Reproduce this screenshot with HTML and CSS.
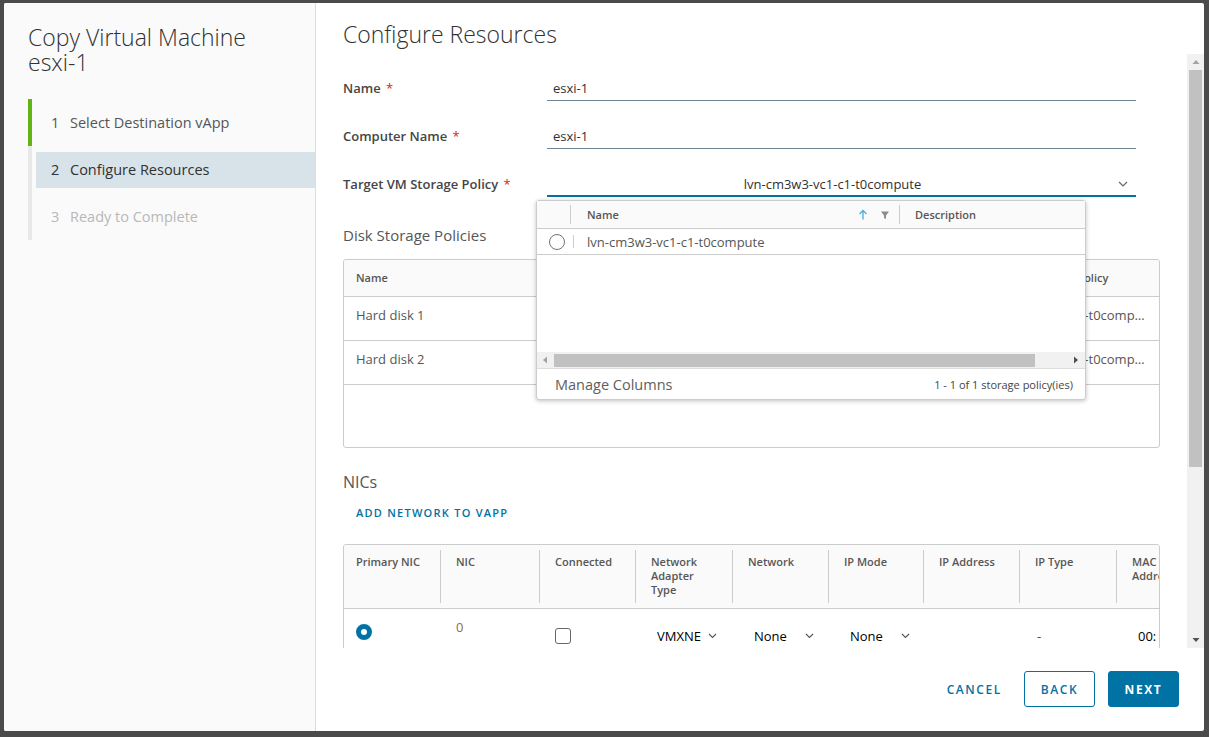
FILE: index.html
```html
<!DOCTYPE html>
<html>
<head>
<meta charset="utf-8">
<title>Copy Virtual Machine</title>
<link rel="stylesheet" href="styles.css">
</head>
<body>
<div class="overlay">
  <div class="modal">
    <aside class="sidebar">
      <h1 class="wiz-title">Copy Virtual Machine<br>esxi-1</h1>
      <ol class="steps">
        <li class="step done"><div class="step-label"><span class="num">1</span>Select Destination vApp</div></li>
        <li class="step current"><div class="step-label"><span class="num">2</span>Configure Resources</div></li>
        <li class="step todo"><div class="step-label"><span class="num">3</span>Ready to Complete</div></li>
      </ol>
    </aside>
    <section class="main">
      <h2 class="page-title">Configure Resources</h2>
      <div class="scroll-area">
        <div class="scroll-content">
          <div class="form">
            <div class="form-row">
              <label class="form-label">Name <span class="req">*</span></label>
              <div class="input">esxi-1</div>
            </div>
            <div class="form-row">
              <label class="form-label">Computer Name <span class="req">*</span></label>
              <div class="input">esxi-1</div>
            </div>
            <div class="form-row last">
              <label class="form-label">Target VM Storage Policy <span class="req">*</span></label>
              <div class="select-wrap">
                <div class="select">
                  <span class="select-text">lvn-cm3w3-vc1-c1-t0compute</span>
                  <svg class="select-caret" width="10" height="6" viewBox="0 0 10 6"><path d="M1 1 L5 5 L9 1" fill="none" stroke="#666" stroke-width="1.2"/></svg>
                </div>
                <div class="popup">
                  <div class="pop-head">
                    <div class="pop-th pop-sel"></div>
                    <div class="pop-th pop-name">
                      <span>Name</span>
                      <span class="pop-icons">
                        <svg width="10" height="11" viewBox="0 0 10 11"><path d="M5 10.5 V1.5 M1.5 5 L5 1.5 L8.5 5" fill="none" stroke="#49afd9" stroke-width="1.3"/></svg>
                        <svg width="10" height="10" viewBox="0 0 10 10"><path d="M1 1.5 H9 L6 5.5 V9 L4 8 V5.5 Z" fill="#8c8c8c"/></svg>
                      </span>
                    </div>
                    <div class="pop-th pop-desc">Description</div>
                  </div>
                  <div class="pop-row">
                    <div class="pop-td pop-sel"><span class="radio-empty"></span></div>
                    <div class="pop-td pop-val">lvn-cm3w3-vc1-c1-t0compute</div>
                  </div>
                  <div class="pop-body"></div>
                  <div class="hscroll">
                    <svg class="hs-arrow" width="6" height="8" viewBox="0 0 6 8"><path d="M5 0.5 V7.5 L1 4 Z" fill="#a3a3a3"/></svg>
                    <div class="hs-thumb"></div>
                    <svg class="hs-arrow right" width="6" height="8" viewBox="0 0 6 8"><path d="M1 0.5 V7.5 L5 4 Z" fill="#505050"/></svg>
                  </div>
                  <div class="pop-foot">
                    <span class="manage">Manage Columns</span>
                    <span class="count">1 - 1 of 1 storage policy(ies)</span>
                  </div>
                </div>
              </div>
            </div>
          </div>

          <h3 class="section-title">Disk Storage Policies</h3>
          <div class="disk-table">
            <div class="disk-row disk-head">
              <div class="th">Name</div>
              <div class="th">Size</div>
              <div class="th">Target VM Storage Policy</div>
            </div>
            <div class="disk-row">
              <div class="td">Hard disk 1</div>
              <div class="td">16 GB</div>
              <div class="td ell">lvn-cm3w3-vc1-c1-t0compute</div>
            </div>
            <div class="disk-row">
              <div class="td">Hard disk 2</div>
              <div class="td">16 GB</div>
              <div class="td ell">lvn-cm3w3-vc1-c1-t0compute</div>
            </div>
            <div class="disk-empty"></div>
          </div>

          <h3 class="section-title nics">NICs</h3>
          <button class="link-btn">ADD NETWORK TO VAPP</button>
          <div class="nic-table">
            <div class="nic-row nic-head">
              <div class="nth first">Primary NIC</div>
              <div class="nth">NIC</div>
              <div class="nth">Connected</div>
              <div class="nth">Network Adapter Type</div>
              <div class="nth">Network</div>
              <div class="nth">IP Mode</div>
              <div class="nth">IP Address</div>
              <div class="nth">IP Type</div>
              <div class="nth last">MAC Address</div>
            </div>
            <div class="nic-row">
              <div class="ntd first"><span class="radio-on"></span></div>
              <div class="ntd"><span class="nic-num">0</span></div>
              <div class="ntd"><span class="checkbox"></span></div>
              <div class="ntd"><span class="mini-select"><span class="ms-text">VMXNE</span><svg width="9" height="6" viewBox="0 0 9 6"><path d="M1 1 L4.5 4.5 L8 1" fill="none" stroke="#555" stroke-width="1.1"/></svg></span></div>
              <div class="ntd"><span class="mini-select"><span class="ms-text">None</span><svg width="9" height="6" viewBox="0 0 9 6"><path d="M1 1 L4.5 4.5 L8 1" fill="none" stroke="#555" stroke-width="1.1"/></svg></span></div>
              <div class="ntd"><span class="mini-select"><span class="ms-text">None</span><svg width="9" height="6" viewBox="0 0 9 6"><path d="M1 1 L4.5 4.5 L8 1" fill="none" stroke="#555" stroke-width="1.1"/></svg></span></div>
              <div class="ntd"></div>
              <div class="ntd"><span class="plain">-</span></div>
              <div class="ntd"><span class="plain mac">00:</span></div>
            </div>
          </div>
        </div>
        <div class="vscroll">
          <svg class="vs-arrow" width="8" height="6" viewBox="0 0 8 6"><path d="M0.5 5 H7.5 L4 1 Z" fill="#a3a3a3"/></svg>
          <div class="vs-thumb"></div>
          <div class="vs-space"></div>
          <svg class="vs-arrow" width="8" height="6" viewBox="0 0 8 6"><path d="M0.5 1 H7.5 L4 5 Z" fill="#505050"/></svg>
        </div>
      </div>
      <footer class="footer">
        <button class="btn btn-flat">CANCEL</button>
        <button class="btn btn-outline">BACK</button>
        <button class="btn btn-primary">NEXT</button>
      </footer>
    </section>
  </div>
</div>
</body>
</html>
```

FILE: styles.css
```css
* { box-sizing: border-box; }
html, body { margin: 0; padding: 0; }
body {
  background: #4b4b4b;
  font-family: "Open Sans", "Liberation Sans", sans-serif;
  color: #565656;
}
.overlay {
  width: 1209px;
  height: 737px;
  padding: 3px 0 0 4px;
}
.modal {
  width: 1200px;
  height: 728px;
  display: flex;
  background: #fff;
  border-radius: 2px;
  overflow: hidden;
}

/* Sidebar */
.sidebar {
  width: 312px;
  flex: none;
  background: #fafafa;
  border-right: 1px solid #dddddd;
  padding: 22px 0 0 24px;
}
.wiz-title {
  margin: 0;
  font-size: 23px;
  font-weight: 300;
  line-height: 25px;
  color: #313131;
}
.steps {
  list-style: none;
  margin: 24px 0 0 0;
  padding: 0;
}
.step {
  border-left: 4px solid #e8e8e8;
  padding: 6px 0 5px 4px;
}
.step.done { border-left-color: #60b515; }
.step-label {
  height: 36px;
  display: flex;
  align-items: center;
  padding-left: 15px;
  padding-bottom: 1px;
  font-size: 14.5px;
  color: #565656;
}
.num { width: 19px; }
.current .step-label { background: #d8e3e9; color: #313131; }
.todo .step-label { color: #b8b8b8; }

/* Main */
.main {
  flex: 1;
  display: flex;
  flex-direction: column;
  min-width: 0;
}
.page-title {
  margin: 0;
  height: 51px;
  padding: 17px 0 0 27px;
  font-size: 23px;
  line-height: 28px;
  font-weight: 300;
  color: #313131;
}
.scroll-area {
  height: 594px;
  display: flex;
}
.scroll-content {
  flex: 1;
  padding: 0 27px;
  overflow: hidden;
  min-width: 0;
}
.vscroll {
  width: 17px;
  flex: none;
  background: #f1f1f1;
  display: flex;
  flex-direction: column;
  align-items: center;
}
.vs-arrow { flex: none; margin: 5px 0; }
.vs-thumb {
  width: 13px;
  height: 397px;
  background: #c1c1c1;
}
.vs-space { flex: 1; }

/* Form */
.form { padding-top: 23px; }
.form-row {
  display: flex;
  height: 24px;
  margin-bottom: 24px;
}
.form-row.last { margin-bottom: 0; }
.form-label {
  width: 204px;
  flex: none;
  font-size: 13px;
  font-weight: 600;
  line-height: 22px;
  color: #454545;
}
.req { color: #e12200; font-weight: 400; margin-left: 2px; }
.input {
  width: 589px;
  height: 24px;
  border-bottom: 1px solid #6f8591;
  padding-left: 6px;
  font-size: 13px;
  line-height: 22px;
  color: #313131;
}
.select-wrap {
  width: 589px;
  position: relative;
}
.select {
  height: 24px;
  border-bottom: 2px solid #0072a3;
  display: flex;
  align-items: center;
  position: relative;
  font-size: 13px;
  color: #313131;
}
.select-text { flex: 1; text-align: center; line-height: 22px; }
.select-caret { margin-right: 8px; }

/* Dropdown popup */
.popup {
  position: absolute;
  left: -11px;
  top: 27px;
  width: 550px;
  height: 200px;
  background: #fff;
  border: 1px solid #cccccc;
  border-radius: 3px;
  box-shadow: 0 1px 4px rgba(0,0,0,0.25);
  display: flex;
  flex-direction: column;
  z-index: 5;
}
.pop-head {
  height: 28px;
  flex: none;
  display: flex;
  background: #fafafa;
  border-bottom: 1px solid #cccccc;
}
.pop-th {
  position: relative;
  display: flex;
  align-items: center;
  font-size: 11px;
  font-weight: 600;
  color: #565656;
}
.pop-sel { width: 34px; flex: none; }
.pop-th.pop-sel::after,
.pop-th.pop-name::after {
  content: "";
  position: absolute;
  right: 0;
  top: 4px;
  bottom: 4px;
  width: 1px;
  background: #cccccc;
}
.pop-name {
  width: 329px;
  flex: none;
  padding-left: 16px;
  justify-content: space-between;
  padding-right: 10px;
}
.pop-icons { display: flex; align-items: center; gap: 12px; }
.pop-desc { flex: 1; padding-left: 15px; }
.pop-row {
  height: 26px;
  flex: none;
  display: flex;
  border-bottom: 1px solid #cccccc;
}
.pop-td {
  display: flex;
  align-items: center;
  position: relative;
  font-size: 13px;
  color: #565656;
}
.pop-td.pop-sel { justify-content: flex-start; padding-left: 12px; }
.pop-td.pop-sel::after {
  content: "";
  position: absolute;
  right: -3px;
  top: 6px;
  bottom: 6px;
  width: 1px;
  background: #cccccc;
}
.pop-val { padding-left: 16px; }
.radio-empty {
  width: 16px;
  height: 16px;
  border: 1px solid #737373;
  border-radius: 50%;
  background: #fff;
}
.pop-body { flex: 1; }
.hscroll {
  height: 16px;
  flex: none;
  background: #f1f1f1;
  display: flex;
  align-items: center;
  padding: 0 6px 0 5px;
}
.hs-thumb {
  height: 13px;
  width: 481px;
  background: #c1c1c1;
  margin-left: 6px;
}
.hs-arrow.right { margin-left: auto; }
.pop-foot {
  height: 31px;
  flex: none;
  border-top: 1px solid #dddddd;
  display: flex;
  align-items: center;
  justify-content: space-between;
  padding: 0 12px 0 18px;
}
.manage { font-size: 14.5px; color: #5e5e5e; }
.count { font-size: 11px; color: #454545; }

/* Sections */
.section-title {
  margin: 28px 0 0 0;
  height: 20px;
  font-size: 15px;
  line-height: 20px;
  font-weight: 400;
  color: #565656;
}
.section-title.nics {
  margin-top: 24px;
  font-size: 16px;
}

/* Disk table */
.disk-table {
  margin-top: 14px;
  border: 1px solid #cccccc;
  border-radius: 3px;
  overflow: hidden;
}
.disk-row {
  display: grid;
  grid-template-columns: 300px 1fr 194px;
  height: 44px;
  border-bottom: 1px solid #cccccc;
}
.disk-head {
  height: 37px;
  background: #fafafa;
}
.th {
  padding: 11px 12px 0;
  font-size: 11px;
  font-weight: 600;
  line-height: 14px;
  color: #565656;
  white-space: nowrap;
  overflow: hidden;
}
.td {
  padding: 10px 12px 0;
  font-size: 13px;
  line-height: 16px;
  color: #565656;
  white-space: nowrap;
}
.td.ell { overflow: hidden; text-overflow: ellipsis; }
.disk-empty { height: 62px; }

/* Link button */
.link-btn {
  display: block;
  margin: 8px 0 0 0;
  height: 24px;
  padding: 0 13px;
  border: 0;
  background: none;
  font-family: inherit;
  font-size: 11px;
  font-weight: 600;
  letter-spacing: 1.25px;
  color: #0072a3;
}

/* NIC table */
.nic-table {
  margin-top: 20px;
  border: 1px solid #cccccc;
  border-radius: 3px 3px 0 0;
  overflow: hidden;
}
.nic-row {
  display: grid;
  grid-template-columns: 97px 99px 96px 97px 96px 95px 96px 97px 97px;
  height: 60px;
}
.nic-head {
  height: 64px;
  background: #fafafa;
  border-bottom: 1px solid #cccccc;
}
.nth {
  position: relative;
  padding: 10px 20px 0 15px;
  font-size: 11px;
  font-weight: 600;
  line-height: 14px;
  color: #565656;
}
.nth.first { padding-left: 12px; padding-right: 6px; }
.nth::after {
  content: "";
  position: absolute;
  right: 0;
  top: 5px;
  bottom: 5px;
  width: 1px;
  background: #cccccc;
}
.nth.last::after { display: none; }
.ntd {
  padding: 12px 0 0 15px;
  font-size: 13px;
  line-height: 16px;
  color: #313131;
  white-space: nowrap;
}
.ntd.first { padding-left: 12px; }
.radio-on {
  display: block;
  margin-top: 3px;
  width: 16px;
  height: 16px;
  border-radius: 50%;
  background: #fff;
  border: 5px solid #0072a3;
}
.nic-num { display: block; color: #9a6a45; margin-top: -2px; }
.checkbox {
  display: block;
  margin-top: 7px;
  width: 16px;
  height: 16px;
  border: 1px solid #666666;
  border-radius: 3px;
  background: #fff;
}
.mini-select {
  margin-top: 7px;
  display: flex;
  align-items: center;
  padding-left: 6px;
  gap: 5px;
  color: #000;
}
.ms-text { width: 46px; overflow: hidden; }
.plain { display: block; margin-top: 7px; padding-left: 2px; color: #454545; }
.plain.mac { padding-left: 6px; color: #000; }

/* Footer */
.footer {
  height: 83px;
  flex: none;
  display: flex;
  justify-content: flex-end;
  align-items: flex-start;
  padding: 23px 25px 0 0;
}
.btn {
  height: 36px;
  border-radius: 3px;
  font-family: inherit;
  font-size: 12px;
  font-weight: 600;
  letter-spacing: 1.6px;
  padding: 0;
  cursor: pointer;
}
.btn-flat {
  border: 1px solid transparent;
  background: none;
  color: #0072a3;
  padding: 0 12px;
  margin-right: 9px;
}
.btn-outline {
  width: 71px;
  border: 1px solid #0072a3;
  background: #fff;
  color: #0072a3;
  margin-right: 13px;
}
.btn-primary {
  width: 71px;
  border: 1px solid #0072a3;
  background: #0072a3;
  color: #fff;
  font-weight: 700;
}
```
